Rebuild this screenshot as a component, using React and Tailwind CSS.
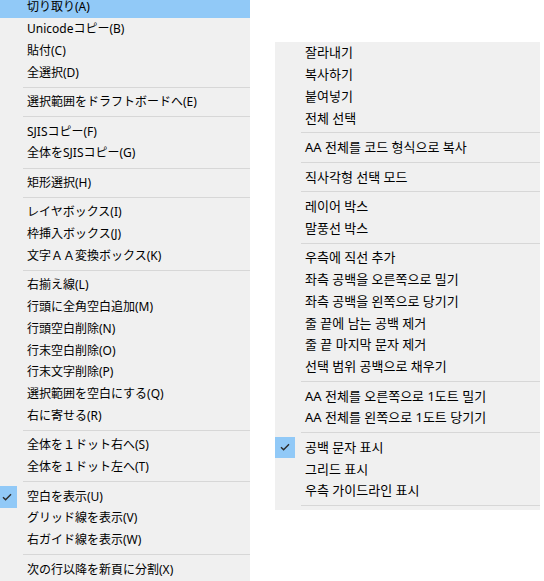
import React from 'react';

const jaItems = [
  { label: '切り取り(A)', active: true },
  { label: 'Unicodeコピー(B)' },
  { label: '貼付(C)' },
  { label: '全選択(D)' },
  'sep',
  { label: '選択範囲をドラフトボードへ(E)' },
  'sep',
  { label: 'SJISコピー(F)' },
  { label: '全体をSJISコピー(G)' },
  'sep',
  { label: '矩形選択(H)' },
  'sep',
  { label: 'レイヤボックス(I)' },
  { label: '枠挿入ボックス(J)' },
  { label: '文字ＡＡ変換ボックス(K)' },
  'sep',
  { label: '右揃え線(L)' },
  { label: '行頭に全角空白追加(M)' },
  { label: '行頭空白削除(N)' },
  { label: '行末空白削除(O)' },
  { label: '行末文字削除(P)' },
  { label: '選択範囲を空白にする(Q)' },
  { label: '右に寄せる(R)' },
  'sep',
  { label: '全体を１ドット右へ(S)' },
  { label: '全体を１ドット左へ(T)' },
  'sep',
  { label: '空白を表示(U)', checked: true },
  { label: 'グリッド線を表示(V)' },
  { label: '右ガイド線を表示(W)' },
  'sep',
  { label: '次の行以降を新頁に分割(X)' },
];

const koItems = [
  { label: '잘라내기' },
  { label: '복사하기' },
  { label: '붙여넣기' },
  { label: '전체 선택' },
  'sep',
  { label: 'AA 전체를 코드 형식으로 복사' },
  'sep',
  { label: '직사각형 선택 모드' },
  'sep',
  { label: '레이어 박스' },
  { label: '말풍선 박스' },
  'sep',
  { label: '우측에 직선 추가' },
  { label: '좌측 공백을 오른쪽으로 밀기' },
  { label: '좌측 공백을 왼쪽으로 당기기' },
  { label: '줄 끝에 남는 공백 제거' },
  { label: '줄 끝 마지막 문자 제거' },
  { label: '선택 범위 공백으로 채우기' },
  'sep',
  { label: 'AA 전체를 오른쪽으로 1도트 밀기' },
  { label: 'AA 전체를 왼쪽으로 1도트 당기기' },
  'sep',
  { label: '공백 문자 표시', checked: true },
  { label: '그리드 표시' },
  { label: '우측 가이드라인 표시' },
  'sep',
];

function Check() {
  return (
    <svg width="10" height="8" viewBox="0 0 10 8" fill="none">
      <path d="M1 4.2 L3.6 6.7 L9 1.2" stroke="#2b2b2b" strokeWidth="1.4" />
    </svg>
  );
}

function Menu({ items, font, className }) {
  return (
    <div className={`bg-[#f0f0f0] text-black ${className}`} style={{ fontFamily: font }}>
      {items.map((item, i) =>
        item === 'sep' ? (
          <div key={i} className="h-[7.75px] flex items-center pl-[26px]">
            <div className="h-px w-full bg-[#d7d7d7]" />
          </div>
        ) : (
          <div
            key={i}
            className={`h-[21.75px] flex items-center whitespace-nowrap ${item.active ? 'bg-[#91c9f7]' : ''}`}
          >
            <div className="w-[30px] h-full flex-shrink-0 flex items-stretch">
              {item.checked && (
                <div className="w-[20px] bg-[#91c9f7] flex items-center justify-center">
                  <Check />
                </div>
              )}
            </div>
            <span className="leading-none">{item.label}</span>
          </div>
        )
      )}
    </div>
  );
}

export default function App() {
  return (
    <div className="w-[544px] h-[581px] bg-white overflow-hidden flex items-start">
      {/* Japanese menu, scrolled slightly past the top-left edge */}
      <Menu
        items={jaItems}
        font={'"Noto Sans", "Noto Sans CJK JP", sans-serif'}
        className="w-[253px] -ml-[3px] -mt-[3.5px] flex-shrink-0 text-[12px]"
      />
      {/* Korean menu */}
      <Menu
        items={koItems}
        font={'"Noto Sans", "Noto Sans CJK KR", sans-serif'}
        className="w-[265px] ml-[25px] mt-[42px] flex-shrink-0 text-[13px]"
      />
    </div>
  );
}
